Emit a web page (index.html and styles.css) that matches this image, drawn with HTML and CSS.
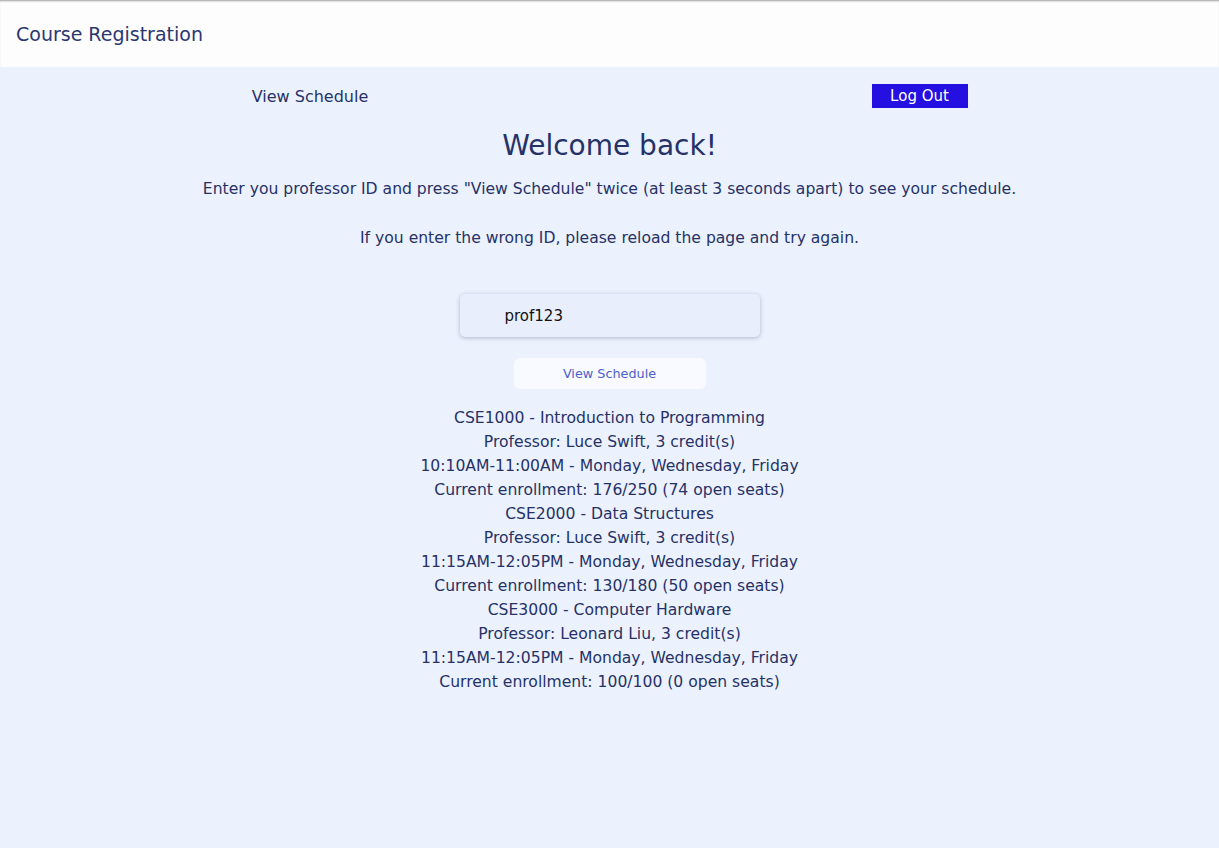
FILE: index.html
```html
<!DOCTYPE html>
<html>
<head>
<meta charset="utf-8">
<link rel="stylesheet" href="styles.css">
</head>
<body>
<header class="topbar">
  <div class="brand">Course Registration</div>
</header>
<main class="main">
  <nav class="nav">
    <a class="nav-link">View Schedule</a>
    <button class="logout">Log Out</button>
  </nav>
  <h1 class="title">Welcome back!</h1>
  <p class="intro">Enter you professor ID and press "View Schedule" twice (at least 3 seconds apart) to see your schedule.</p>
  <p class="intro">If you enter the wrong ID, please reload the page and try again.</p>
  <div class="form">
    <div class="idbox">prof123</div>
    <button class="view-btn">View Schedule</button>
  </div>
  <div class="schedule">
    <div>CSE1000 - Introduction to Programming</div>
    <div>Professor: Luce Swift, 3 credit(s)</div>
    <div>10:10AM-11:00AM - Monday, Wednesday, Friday</div>
    <div>Current enrollment: 176/250 (74 open seats)</div>
    <div>CSE2000 - Data Structures</div>
    <div>Professor: Luce Swift, 3 credit(s)</div>
    <div>11:15AM-12:05PM - Monday, Wednesday, Friday</div>
    <div>Current enrollment: 130/180 (50 open seats)</div>
    <div>CSE3000 - Computer Hardware</div>
    <div>Professor: Leonard Liu, 3 credit(s)</div>
    <div>11:15AM-12:05PM - Monday, Wednesday, Friday</div>
    <div>Current enrollment: 100/100 (0 open seats)</div>
  </div>
</main>
</body>
</html>
```

FILE: styles.css
```css
* { box-sizing: border-box; }
html, body { margin: 0; padding: 0; height: 100%; }
body {
  font-family: "DejaVu Sans", "Open Sans", sans-serif;
  color: #263267;
  background: #ebf1fd;
}
.topbar {
  height: 67px;
  background: #fdfdfd;
  display: flex;
  align-items: center;
  padding-left: 16px;
  box-shadow: inset 0 2px 2px -1px #a0a0a0;
}
.brand {
  font-size: 19px;
  color: #2b3770;
}
.main {
  display: flex;
  flex-direction: column;
  align-items: center;
  min-height: calc(100% - 67px);
}
.nav {
  width: 100%;
  display: flex;
  justify-content: space-around;
  align-items: center;
  padding-top: 17px;
  height: 41px;
}
.nav-link {
  font-size: 16px;
  color: #263267;
  width: 117px;
  text-align: center;
  white-space: nowrap;
}
.logout {
  width: 96px;
  height: 24px;
  background: #2410e0;
  color: #ffffff;
  border: none;
  font-family: inherit;
  font-size: 15px;
  padding: 0;
}
.title {
  font-size: 28px;
  font-weight: 400;
  margin: 21px 0 0;
  line-height: 34px;
  color: #263267;
}
.intro {
  font-size: 15.6px;
  margin: 16px 0 0;
  line-height: 20px;
  white-space: nowrap;
}
.intro + .intro { margin-top: 29px; }
.form {
  display: flex;
  flex-direction: column;
  align-items: center;
  margin-top: 46px;
}
.idbox {
  width: 300px;
  height: 43px;
  background: #e8eefb;
  border-radius: 5px;
  box-shadow: 0 1px 4px rgba(40, 50, 90, 0.3);
  display: flex;
  align-items: center;
  padding-left: 45px;
  font-size: 15px;
  color: #111111;
}
.view-btn {
  margin-top: 21px;
  width: 192px;
  height: 31px;
  background: #f8faff;
  border: none;
  border-radius: 6px;
  color: #4c5fcc;
  font-family: inherit;
  font-size: 12.8px;
}
.schedule {
  margin-top: 17px;
  text-align: center;
  font-size: 15.6px;
  line-height: 24px;
  color: #263267;
}
```
